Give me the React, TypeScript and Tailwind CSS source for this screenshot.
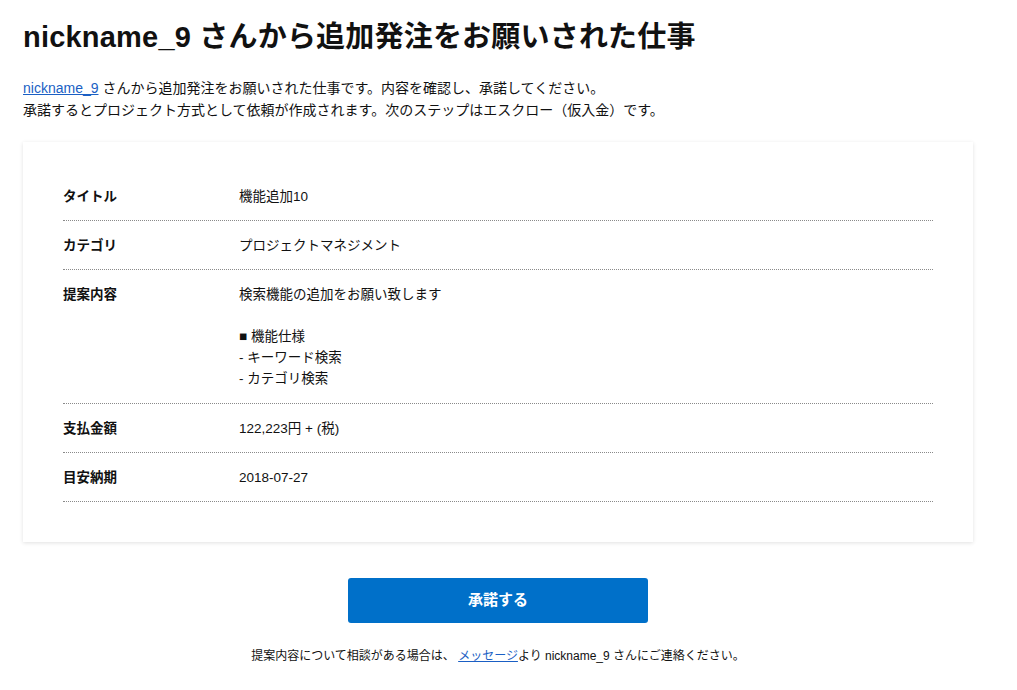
const rows: { label: string; value: string[] }[] = [
  { label: "タイトル", value: ["機能追加10"] },
  { label: "カテゴリ", value: ["プロジェクトマネジメント"] },
  {
    label: "提案内容",
    value: ["検索機能の追加をお願い致します", "", "■ 機能仕様", "- キーワード検索", "- カテゴリ検索"],
  },
  { label: "支払金額", value: ["122,223円 + (税)"] },
  { label: "目安納期", value: ["2018-07-27"] },
];

export default function App() {
  return (
    <div
      className="min-h-screen bg-white px-[23px] pt-[17px] text-[#111]"
      style={{ fontFamily: '"Liberation Sans", "Noto Sans CJK JP", sans-serif' }}
    >
      <h1 className="text-[29px] font-bold leading-[40px] tracking-[0.2px]">
        nickname_9 さんから追加発注をお願いされた仕事
      </h1>

      <div className="mt-[20px] text-[14px] leading-[22px]">
        <p>
          <a href="#" className="text-[#1a5fc4] underline">
            nickname_9
          </a>{" "}
          さんから追加発注をお願いされた仕事です。内容を確認し、承諾してください。
        </p>
        <p>承諾するとプロジェクト方式として依頼が作成されます。次のステップはエスクロー（仮入金）です。</p>
      </div>

      {/* --- detail card --- */}
      <div className="mt-[21px] w-[950px] bg-white px-[40px] pt-[30px] pb-[40px] shadow-[0_1px_4px_rgba(0,0,0,0.12)]">
        {rows.map(row => (
          <div
            key={row.label}
            className={
              "flex border-b border-dotted border-[#8a8a8a] pt-[14px] text-[13.5px] leading-[21px] " +
              (row.value.length > 1 ? "pb-[14px]" : "pb-[13px]")
            }
          >
            <div className="w-[176px] shrink-0 font-bold">{row.label}</div>
            <div>
              {row.value.map((line, i) => (
                <div key={i} className="min-h-[21px]">
                  {line}
                </div>
              ))}
            </div>
          </div>
        ))}
      </div>

      {/* --- actions --- */}
      <div className="mt-[36px] flex w-[950px] flex-col items-center">
        <button className="h-[45px] w-[300px] rounded-[3px] bg-[#0070c9] text-[15px] font-bold text-white">
          承諾する
        </button>
        <p className="mt-[23px] text-[12px] leading-[20px]">
          提案内容について相談がある場合は、{" "}
          <a href="#" className="text-[#1a5fc4] underline">
            メッセージ
          </a>
          より nickname_9 さんにご連絡ください。
        </p>
      </div>
    </div>
  );
}
